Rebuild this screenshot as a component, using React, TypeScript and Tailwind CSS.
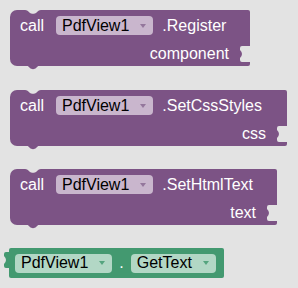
import React from "react";

const font = { fontFamily: '"Liberation Sans", Arial, sans-serif' };

// small down arrow inside a dropdown field
const Arrow = ({ color }: { color: string }) => (
  <svg width="6" height="4" viewBox="0 0 6 4" className="shrink-0">
    <path d="M0 0 H6 L3 4 Z" fill={color} />
  </svg>
);

const Dropdown = ({ label, tone }: { label: string; tone: "purple" | "green" }) => (
  <div
    className={
      tone === "purple"
        ? "h-[19px] flex items-center gap-[11px] pl-[6px] pr-[7px] rounded-[4px] bg-[#c9b6cd]"
        : "h-[19px] flex items-center gap-[11px] pl-[6px] pr-[7px] rounded-[4px] bg-[#b2d7c5]"
    }
  >
    <span className="text-black leading-none">{label}</span>
    <Arrow color={tone === "purple" ? "#94779c" : "#55a47e"} />
  </div>
);

// notch cut into the top edge, tab below the bottom edge
const TopNotch = () => (
  <svg width="16" height="4" viewBox="0 0 16 4" className="absolute top-0 left-[15px]">
    <path d="M0 0 C2 0 3 1 5 3 C6 4 10 4 11 3 C13 1 14 0 16 0 Z" fill="#e3e3e3" />
  </svg>
);

const BottomTab = () => (
  <svg width="16" height="5" viewBox="0 0 16 5" className="absolute -bottom-[4px] left-[15px]">
    <path d="M0 0 C2 0 3 1 5 3 C6 4.5 10 4.5 11 3 C13 1 14 0 16 0 Z" fill="#7c5385" />
  </svg>
);

// value socket on the right edge
const Socket = () => (
  <svg width="10" height="16" viewBox="0 0 10 16" className="absolute right-0 top-[36px]">
    <path d="M10 0 H2 Q0 0 0 2 V4 Q4 8 0 12 V14 Q0 16 2 16 H10 Z" fill="#e3e3e3" />
  </svg>
);

const CallBlock = ({ method, arg, width }: { method: string; arg: string; width: string }) => (
  <div className={`relative h-[56px] ${width} bg-[#7c5385] rounded-l-[7px] rounded-r-[2px] text-white`}>
    <TopNotch />
    <div className="h-[31px] flex items-center pl-[10px]">
      <span className="mr-[12px]">call</span>
      <Dropdown label="PdfView1" tone="purple" />
      <span className="ml-[9px]">{method}</span>
    </div>
    <div className="h-[25px] flex items-center justify-end pr-[21px]">
      <span>{arg}</span>
    </div>
    <Socket />
    <BottomTab />
  </div>
);

export default function App() {
  return (
    <div className="w-[298px] h-[288px] bg-[#e3e3e3] pt-[10px] pl-[10px] text-[16px]" style={font}>
      <CallBlock method=".Register" arg="component" width="w-[240px]" />
      <div className="mt-[24px]">
        <CallBlock method=".SetCssStyles" arg="css" width="w-[277px]" />
      </div>
      <div className="mt-[23px]">
        <CallBlock method=".SetHtmlText" arg="text" width="w-[267px]" />
      </div>

      {/* getter block */}
      <div className="relative mt-[23px] -ml-[1px] w-[215px] h-[30px] bg-[#439970] rounded-[2px] flex items-center pl-[6px] gap-[7px] text-white">
        <svg width="7" height="16" viewBox="0 0 7 16" className="absolute -left-[6px] top-[4px]">
          <path d="M7 0 H3 Q1 0 1 2 V4 Q5 8 1 12 V14 Q1 16 3 16 H7 Z" fill="#439970" />
        </svg>
        <Dropdown label="PdfView1" tone="green" />
        <span>.</span>
        <Dropdown label="GetText" tone="green" />
      </div>
    </div>
  );
}
